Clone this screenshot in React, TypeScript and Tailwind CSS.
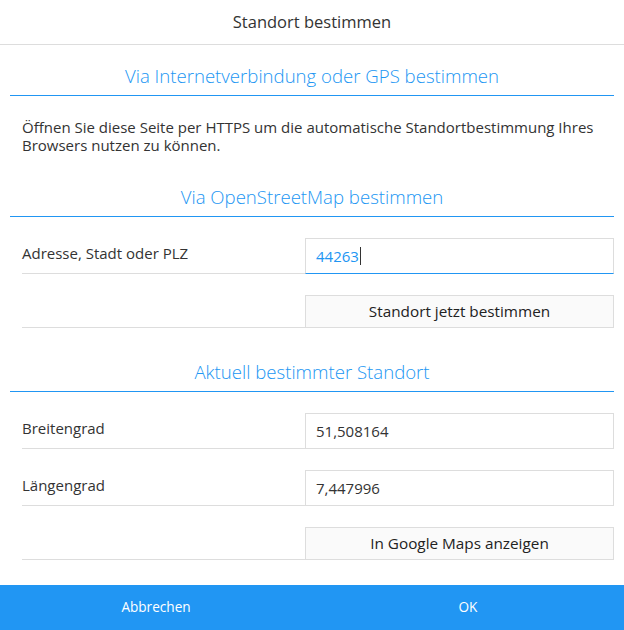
import React from "react";

function Heading({ children, className = "" }: { children: React.ReactNode; className?: string }) {
  return (
    <div
      className={`text-center text-[18.6px] leading-[22px] font-light text-[#2196F3] pb-[8px] border-b border-[#2196F3] ${className}`}
    >
      {children}
    </div>
  );
}

function FieldRow({ label, value, focused = false }: { label: string; value: string; focused?: boolean }) {
  return (
    <div className="ml-[12px] mt-[21px] flex h-[36px]">
      <div className="w-[283px] border-b border-[#ddd] pt-[5px] text-[15px] leading-[20px] text-[#333]">{label}</div>
      <div
        className={`flex-1 flex items-center pl-[10px] border border-[#ddd] text-[15px] ${
          focused ? "border-b-[#2196F3] text-[#2196F3]" : "text-[#333]"
        }`}
      >
        <span>{value}</span>
        {focused && <span className="ml-[1px] inline-block w-[1px] h-[18px] bg-[#333]" />}
      </div>
    </div>
  );
}

function ButtonRow({ text }: { text: string }) {
  return (
    <div className="ml-[12px] mt-[21px] flex h-[33px]">
      <div className="w-[283px] border-b border-[#ddd]" />
      <div className="flex-1 flex items-center justify-center border border-[#ddd] bg-[#fafafa] text-[15.3px] text-[#222]">
        {text}
      </div>
    </div>
  );
}

export default function App() {
  return (
    <div className="w-[624px] h-[630px] bg-white flex flex-col font-['Open_Sans',sans-serif]">
      <div className="h-[45px] shrink-0 border-b border-[#ddd] flex items-center justify-center text-[16.5px] text-[#333]">
        Standort bestimmen
      </div>
      <div className="flex-1 px-[10px]">
        <Heading className="mt-[20px]">Via Internetverbindung oder GPS bestimmen</Heading>
        <p className="pl-[12px] mt-[22px] text-[15px] leading-[18px] text-[#333]">
          Öffnen Sie diese Seite per HTTPS um die automatische Standortbestimmung Ihres Browsers nutzen zu können.
        </p>
        <Heading className="mt-[32px]">Via OpenStreetMap bestimmen</Heading>
        <FieldRow label="Adresse, Stadt oder PLZ" value="44263" focused />
        <ButtonRow text="Standort jetzt bestimmen" />
        <Heading className="mt-[33px]">Aktuell bestimmter Standort</Heading>
        <FieldRow label="Breitengrad" value="51,508164" />
        <FieldRow label="Längengrad" value="7,447996" />
        <ButtonRow text="In Google Maps anzeigen" />
      </div>
      <div className="h-[45px] shrink-0 bg-[#2196F3] flex text-white text-[13.6px]">
        <div className="flex-1 flex items-center justify-center">Abbrechen</div>
        <div className="flex-1 flex items-center justify-center">OK</div>
      </div>
    </div>
  );
}
